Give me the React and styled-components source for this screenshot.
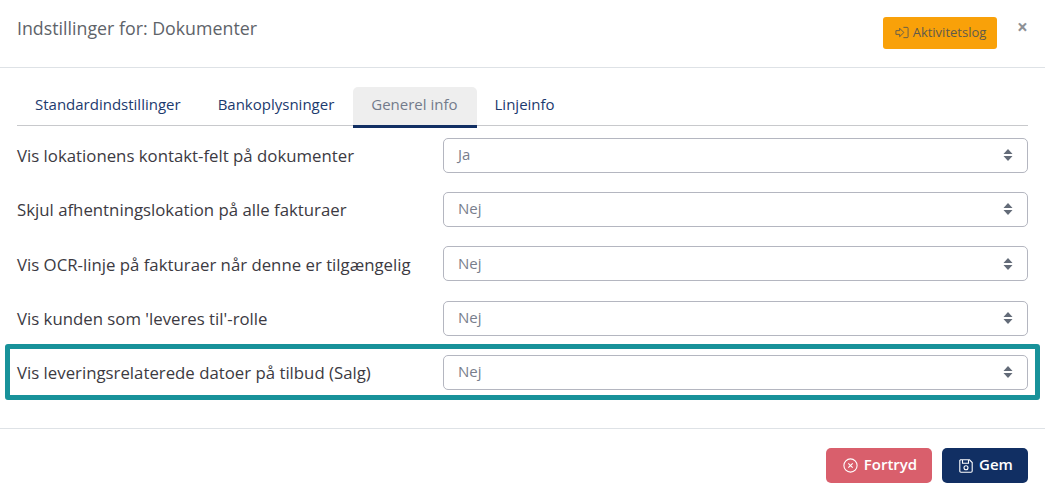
import React from "react";
import styled, { createGlobalStyle } from "styled-components";

const Global = createGlobalStyle`
  html, body { margin: 0; padding: 0; background: #fff; }
  body { font-family: "Open Sans", "Liberation Sans", sans-serif; }
`;

const Modal = styled.div`
  width: 1045px;
  height: 501px;
  display: flex;
  flex-direction: column;
  overflow: hidden;
  background: #fff;
`;
const Header = styled.header`
  height: 68px;
  box-sizing: border-box;
  border-bottom: 1px solid #dee2e6;
  display: flex;
  align-items: flex-start;
  padding: 0 17px 0 17px;
`;
const Title = styled.h5`
  margin: 15px 0 0;
  font-size: 17.8px;
  line-height: 27px;
  font-weight: 400;
  color: #5e6369;
  flex: 1;
`;
const LogButton = styled.button`
  margin-top: 17px;
  width: 114px;
  height: 32px;
  border: 0;
  border-radius: 3px;
  background: #f9a109;
  color: #5f5a4c;
  font: 400 13px "Open Sans", sans-serif;
  display: flex;
  align-items: center;
  justify-content: center;
  gap: 4px;
  padding: 0 0 2px 1px;
`;
const Close = styled.span`
  margin: 17px 0 0 20px;
  width: 11px;
  font-size: 19px;
  line-height: 20px;
  font-weight: 700;
  color: #8e9196;
  text-align: center;
`;
const Body = styled.div`
  padding: 19px 17px 0;
  height: 361px;
  box-sizing: border-box;
  border-bottom: 1px solid #dee2e6;
  margin-bottom: 19px;
`;
const Tabs = styled.nav`
  display: flex;
  height: 38px;
  border-bottom: 1px solid #c8c9cc;
`;
const Tab = styled.a`
  height: 41px;
  box-sizing: border-box;
  padding: 0 19px 0 18px;
  line-height: 35px;
  font-size: 15px;
  border-radius: 5px 5px 0 0;
  color: ${(p) => (p.$active ? "#737b8b" : "#1c3a6e")};
  background: ${(p) => (p.$active ? "#eeeeee" : "transparent")};
  border-bottom: 3px solid ${(p) => (p.$active ? "#112f63" : "transparent")};
`;
const Rows = styled.div`
  margin-top: 11.5px;
  display: flex;
  flex-direction: column;
`;
const Row = styled.div`
  position: relative;
  height: 54.35px;
  flex: none;
  display: grid;
  grid-template-columns: 426px 585px;
  align-items: start;
  &::after {
    content: ${(p) => (p.$highlight ? '""' : "none")};
    position: absolute;
    left: -12px;
    right: -12px;
    top: -11px;
    height: 56px;
    box-sizing: border-box;
    border: 5px solid #18929a;
    border-radius: 3px;
    pointer-events: none;
  }
`;
const Label = styled.label`
  font-size: 16.8px;
  line-height: 22px;
  padding-top: 7.5px;
  color: #3c3a42;
  white-space: nowrap;
`;
const SelectBox = styled.div`
  height: 35px;
  box-sizing: border-box;
  border: 1px solid #b4b6c0;
  border-radius: 5px;
  display: flex;
  align-items: center;
  justify-content: space-between;
  padding: 0 14px 2px 14px;
  font-size: 15px;
  color: #787e8c;
`;
const Footer = styled.footer`
  display: flex;
  justify-content: flex-end;
  gap: 10px;
  padding-right: 17px;
`;
const ActionButton = styled.button`
  width: ${(p) => p.$w}px;
  height: 35px;
  border: 0;
  border-radius: 5px;
  background: ${(p) => p.$bg};
  color: #fff;
  font: 600 15px "Open Sans", sans-serif;
  display: flex;
  align-items: center;
  justify-content: center;
  gap: 6px;
  padding: 0 0 3px 2px;
`;

const Arrows = () => (
  <svg width="10" height="14" viewBox="0 0 10 14" fill="#636b78" style={{ marginTop: 2 }}>
    <path d="M5 1 L9.5 6 H0.5 Z" />
    <path d="M5 13 L0.5 8 H9.5 Z" />
  </svg>
);
const LogIcon = () => (
  <svg width="14" height="13" viewBox="0 0 15 13" fill="none" stroke="#5f5a4c" strokeWidth="1">
    <path d="M1 4.5 H5 V2 L9.5 6.5 L5 11 V8.5 H1 Z" strokeLinejoin="round" />
    <path d="M9 1 H13 Q14 1 14 2 V11 Q14 12 13 12 H9" />
  </svg>
);
const CancelIcon = () => (
  <svg width="15" height="15" viewBox="0 0 15 15" fill="none" stroke="#fff" strokeWidth="1.1" style={{ marginTop: 3 }}>
    <circle cx="7.5" cy="7.5" r="6.6" />
    <path d="M5.3 5.3 L9.7 9.7 M9.7 5.3 L5.3 9.7" />
  </svg>
);
const SaveIcon = () => (
  <svg width="14" height="14" viewBox="0 0 14 14" fill="none" stroke="#fff" strokeWidth="1.1" style={{ marginTop: 3 }}>
    <path d="M1.5 0.8 H10.5 L13.2 3.5 V12 Q13.2 13.2 12 13.2 H2 Q0.8 13.2 0.8 12 V1.5 Z" />
    <path d="M3.5 1 V4.2 H9.5 V1" />
    <circle cx="7" cy="8.8" r="2" />
  </svg>
);

const rows = [
  ["Vis lokationens kontakt-felt på dokumenter", "Ja"],
  ["Skjul afhentningslokation på alle fakturaer", "Nej"],
  ["Vis OCR-linje på fakturaer når denne er tilgængelig", "Nej"],
  ["Vis kunden som 'leveres til'-rolle", "Nej"],
  ["Vis leveringsrelaterede datoer på tilbud (Salg)", "Nej", true],
];

export default function App() {
  return (
    <Modal>
      <Global />
      <Header>
        <Title>Indstillinger for: Dokumenter</Title>
        <LogButton><LogIcon />Aktivitetslog</LogButton>
        <Close>×</Close>
      </Header>
      <Body>
        <Tabs>
          <Tab>Standardindstillinger</Tab>
          <Tab>Bankoplysninger</Tab>
          <Tab $active>Generel info</Tab>
          <Tab>Linjeinfo</Tab>
        </Tabs>
        <Rows>
          {rows.map(([label, value, hl]) => (
            <Row key={label} $highlight={hl}>
              <Label>{label}</Label>
              <SelectBox>{value}<Arrows /></SelectBox>
            </Row>
          ))}
        </Rows>
      </Body>
      <Footer>
        <ActionButton $w={106} $bg="#d95f6c"><CancelIcon />Fortryd</ActionButton>
        <ActionButton $w={86} $bg="#112f63"><SaveIcon />Gem</ActionButton>
      </Footer>
    </Modal>
  );
}
